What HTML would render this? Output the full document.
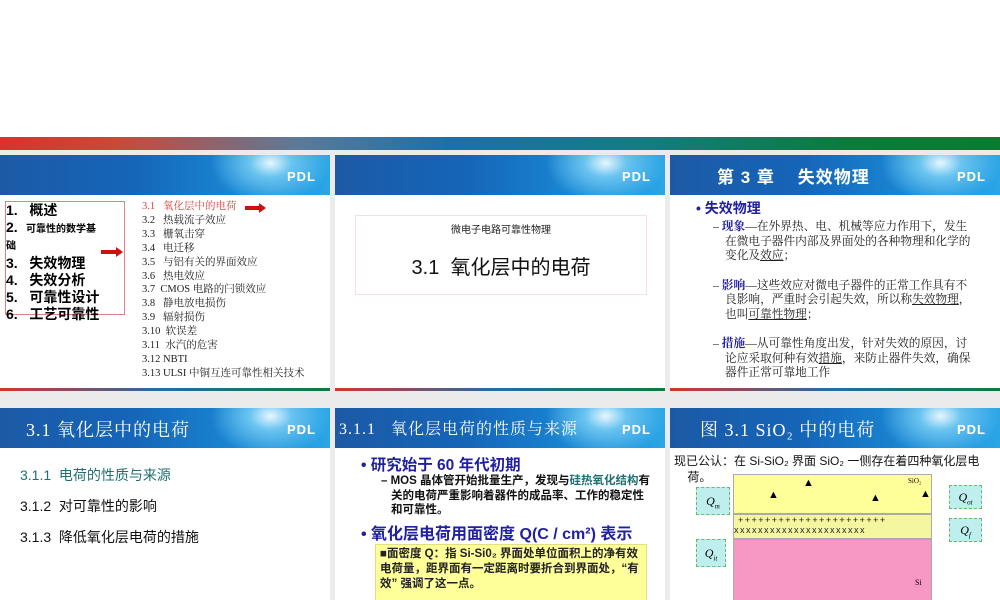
<!DOCTYPE html>
<html><head><meta charset="utf-8"><style>
*{margin:0;padding:0;box-sizing:border-box}
body{width:1000px;height:600px;background:#fff;position:relative;overflow:hidden;font-family:"Liberation Sans","Noto Sans CJK SC",sans-serif}
.topbar{position:absolute;left:0;top:137px;width:1000px;height:13px;background:linear-gradient(90deg,#d8332c 0%,#c84a3a 12%,#5a7a99 30%,#1e6fa6 45%,#177a80 65%,#0f7a3a 85%,#0d7a30 100%)}
.gap{position:absolute;background:#ebebeb}
.slide{position:absolute;background:#fff;overflow:hidden}
.hdr{position:absolute;left:0;top:0;width:100%;height:40px;background:radial-gradient(ellipse 60px 40px at 82% 20%,#e8f6ff 0%,#6ac4f0 35%,rgba(20,120,200,0) 100%),linear-gradient(90deg,#1c5aa6 0%,#1565b8 40%,#1a8ad6 75%,#2aa6e6 100%)}
.hdr .logo{position:absolute;right:14px;top:14px;color:#fff;font-size:13px;font-weight:bold;letter-spacing:1px}
.hdr .t{position:absolute;top:8px;color:#fff;font-size:17px;font-family:"Liberation Serif","Noto Serif CJK SC",serif;letter-spacing:1px}
.bot{position:absolute;left:0;bottom:0;width:100%;height:3px;background:linear-gradient(90deg,#d8332c,#1e6fa6,#0f7a3a)}
.ser{font-family:"Liberation Serif","Noto Serif CJK SC",serif}
.u{text-decoration:underline}
b.bl{color:#2020a0}
.arr{position:absolute;height:4px;background:#d01010}
.arr:after{content:"";position:absolute;right:-6px;top:-3px;border-left:7px solid #d01010;border-top:5px solid transparent;border-bottom:5px solid transparent}
</style></head><body>
<div class="topbar"></div>
<div class="gap" style="left:0;top:150px;width:1000px;height:5px"></div>
<div class="gap" style="left:330px;top:150px;width:5px;height:450px"></div>
<div class="gap" style="left:665px;top:150px;width:5px;height:450px"></div>
<div class="gap" style="left:0;top:391px;width:1000px;height:17px"></div>

<!-- slide 1 -->
<div class="slide" style="left:0;top:155px;width:330px;height:236px">
<div class="hdr"><div class="logo">PDL</div></div>
<div style="position:absolute;left:5px;top:46px;width:120px;height:114px;border:1px solid #e08080;font-weight:bold;color:#000;line-height:17px">
<div style="font-size:14px">1.&nbsp;&nbsp;&nbsp;概述</div>
<div style="font-size:10px"><span style="font-size:14px">2.</span>&nbsp;&nbsp;&nbsp;可靠性的数学基<br>础</div>
<div style="font-size:14px">3.&nbsp;&nbsp;&nbsp;失效物理</div>
<div style="font-size:14px">4.&nbsp;&nbsp;&nbsp;失效分析</div>
<div style="font-size:14px">5.&nbsp;&nbsp;&nbsp;可靠性设计</div>
<div style="font-size:14px">6.&nbsp;&nbsp;&nbsp;工艺可靠性</div>
</div>
<div class="arr" style="left:101px;top:95px;width:16px"></div>
<div class="arr" style="left:245px;top:51px;width:15px"></div>
<div class="ser" style="position:absolute;left:142px;top:45px;font-size:10.5px;line-height:13.9px;color:#222">
<div style="color:#d84040">3.1&nbsp;&nbsp;&nbsp;氧化层中的电荷</div>
<div>3.2&nbsp;&nbsp;&nbsp;热载流子效应</div><div>3.3&nbsp;&nbsp;&nbsp;栅氧击穿</div><div>3.4&nbsp;&nbsp;&nbsp;电迁移</div><div>3.5&nbsp;&nbsp;&nbsp;与铝有关的界面效应</div><div>3.6&nbsp;&nbsp;&nbsp;热电效应</div><div>3.7&nbsp;&nbsp;CMOS 电路的闩锁效应</div><div>3.8&nbsp;&nbsp;&nbsp;静电放电损伤</div><div>3.9&nbsp;&nbsp;&nbsp;辐射损伤</div><div>3.10&nbsp;&nbsp;软误差</div><div>3.11&nbsp;&nbsp;水汽的危害</div><div>3.12 NBTI</div><div>3.13 ULSI 中铜互连可靠性相关技术</div>
</div>
<div class="bot"></div>
</div>

<!-- slide 2 -->
<div class="slide" style="left:335px;top:155px;width:330px;height:236px">
<div class="hdr"><div class="logo">PDL</div></div>
<div style="position:absolute;left:20px;top:60px;width:292px;height:80px;border:1px solid #f4e0e0;text-align:center">
<div style="font-size:10px;margin-top:5px;color:#222">微电子电路可靠性物理</div>
<div style="font-size:20px;margin-top:15px;color:#111">3.1&nbsp;&nbsp;氧化层中的电荷</div>
</div>
<div class="bot"></div>
</div>

<!-- slide 3 -->
<div class="slide" style="left:670px;top:155px;width:330px;height:236px">
<div class="hdr"><div class="t" style="left:47px;font-family:'Liberation Sans','Noto Sans CJK SC',sans-serif;font-weight:bold">第 3 章&nbsp;&nbsp;&nbsp;&nbsp;失效物理</div><div class="logo">PDL</div></div>
<div style="position:absolute;left:26px;top:43px;font-size:14px;font-weight:bold;color:#2020a0">• 失效物理</div>
<div class="ser" style="position:absolute;left:43px;top:65px;width:264px;font-size:11.7px;line-height:14.5px;color:#222">
<div style="text-indent:-12px;padding-left:12px">– <b class="bl">现象</b>—在外界热、电、机械等应力作用下，发生在微电子器件内部及界面处的各种物理和化学的变化及<span class="u">效应</span>；</div>
<div style="text-indent:-12px;padding-left:12px;margin-top:15px">– <b class="bl">影响</b>—这些效应对微电子器件的正常工作具有不良影响，严重时会引起失效，所以称<span class="u">失效物理</span>，也叫<span class="u">可靠性物理</span>；</div>
<div style="text-indent:-12px;padding-left:12px;margin-top:15px">– <b class="bl">措施</b>—从可靠性角度出发，针对失效的原因，讨论应采取何种有效<span class="u">措施</span>，来防止器件失效，确保器件正常可靠地工作</div>
</div>
<div class="bot"></div>
</div>

<!-- slide 4 -->
<div class="slide" style="left:0;top:408px;width:330px;height:192px">
<div class="hdr"><div class="t" style="left:26px;font-size:18px">3.1 氧化层中的电荷</div><div class="logo">PDL</div></div>
<div style="position:absolute;left:20px;top:52px;font-size:14px;line-height:31px;color:#111">
<div style="color:#207070">3.1.1&nbsp;&nbsp;电荷的性质与来源</div><div>3.1.2&nbsp;&nbsp;对可靠性的影响</div><div>3.1.3&nbsp;&nbsp;降低氧化层电荷的措施</div>
</div>
</div>

<!-- slide 5 -->
<div class="slide" style="left:335px;top:408px;width:330px;height:192px">
<div class="hdr"><div class="t" style="left:4px;font-size:16px">3.1.1&nbsp;&nbsp;&nbsp;氧化层电荷的性质与来源</div><div class="logo">PDL</div></div>
<div style="position:absolute;left:26px;top:45px;font-size:15.5px;font-weight:bold;color:#2020a0">• 研究始于 60 年代初期</div>
<div style="position:absolute;left:46px;top:66px;width:272px;font-size:11.5px;line-height:14.5px;color:#111;font-weight:bold;text-indent:-10px;padding-left:10px">– MOS 晶体管开始批量生产，发现与<span style="color:#207070">硅热氧化结构</span>有关的电荷严重影响着器件的成品率、工作的稳定性和可靠性。</div>
<div style="position:absolute;left:26px;top:112px;font-size:16px;font-weight:bold;color:#2020a0">• 氧化层电荷用面密度 Q(C / cm²) 表示</div>
<div style="position:absolute;left:40px;top:136px;width:272px;height:60px;background:#ffff99;border:1px solid #e0e080;font-size:11.5px;line-height:15px;font-weight:bold;color:#222;padding:2px 4px">■面密度 Q：指 Si-Si0₂ 界面处单位面积上的净有效电荷量，距界面有一定距离时要折合到界面处，“有效” 强调了这一点。</div>
</div>

<!-- slide 6 -->
<div class="slide" style="left:670px;top:408px;width:330px;height:192px">
<div class="hdr"><div class="t" style="left:30px;font-size:18px">图 3.1 SiO₂ 中的电荷</div><div class="logo">PDL</div></div>
<div style="position:absolute;left:4px;top:45px;font-size:12px;line-height:16px;color:#111;width:300px;white-space:nowrap">现已公认：在 Si-SiO₂ 界面 SiO₂ 一侧存在着四种氧化层电<br>&nbsp;&nbsp;&nbsp;&nbsp;荷。</div>
<div style="position:absolute;left:63px;top:66px;width:199px;height:40px;background:#ffff99;border:1px solid #aaa"></div>
<div style="position:absolute;left:63px;top:106px;width:199px;height:25px;background:#f4f7a0;border:1px solid #aaa;font-size:9px;letter-spacing:1.5px;line-height:10px;color:#222;overflow:hidden;white-space:nowrap">&nbsp;++++++++++++++++++++++<br>xxxxxxxxxxxxxxxxxxxxxx</div>
<div style="position:absolute;left:63px;top:131px;width:199px;height:70px;background:#f797c4;border:1px solid #aaa"></div>
<div style="position:absolute;left:245px;top:170px;font-size:8px" class="ser">Si</div>
<div style="position:absolute;left:238px;top:69px;font-size:7px" class="ser">SiO₂</div>
<div style="position:absolute;left:133px;top:69px;font-size:11px">▲</div>
<div style="position:absolute;left:98px;top:81px;font-size:11px">▲</div>
<div style="position:absolute;left:200px;top:84px;font-size:11px">▲</div>
<div style="position:absolute;left:250px;top:80px;font-size:11px">▲</div>
<div style="position:absolute;left:26px;top:79px;width:34px;height:28px;background:#bfeeee;border:1px dashed #6b6;font-style:italic;font-size:12px;text-align:center;line-height:26px" class="ser">Q<sub style="font-size:7px">m</sub></div>
<div style="position:absolute;left:26px;top:131px;width:30px;height:28px;background:#bfeeee;border:1px dashed #6b6;font-style:italic;font-size:12px;text-align:center;line-height:26px" class="ser">Q<sub style="font-size:7px">it</sub></div>
<div style="position:absolute;left:279px;top:77px;width:33px;height:24px;background:#bfeeee;border:1px dashed #6b6;font-style:italic;font-size:12px;text-align:center;line-height:22px" class="ser">Q<sub style="font-size:7px">ot</sub></div>
<div style="position:absolute;left:279px;top:110px;width:33px;height:24px;background:#bfeeee;border:1px dashed #6b6;font-style:italic;font-size:12px;text-align:center;line-height:22px" class="ser">Q<sub style="font-size:7px">f</sub></div>
</div>
</body></html>
